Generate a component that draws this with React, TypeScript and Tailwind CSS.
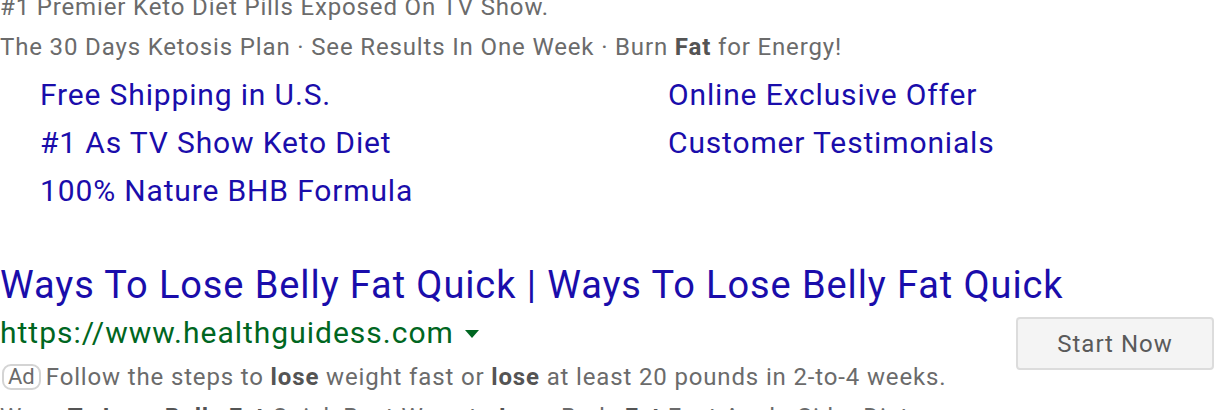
const sitelinks = [
  "Free Shipping in U.S.",
  "Online Exclusive Offer",
  "#1 As TV Show Keto Diet",
  "Customer Testimonials",
  "100% Nature BHB Formula",
];

const App = () => {
  return (
    <div className="w-[1216px] h-[410px] overflow-hidden bg-white font-['Roboto',sans-serif]">
      <div className="-mt-[13px] text-[24px] leading-[40px] tracking-[0.85px] text-[#6b6b6b] whitespace-nowrap">
        <div>#1 Premier Keto Diet Pills Exposed On TV Show.</div>
        <div>
          The 30 Days Ketosis Plan · See Results In One Week · Burn{" "}
          <b className="font-bold text-[#545454]">Fat</b> for Energy!
        </div>
      </div>

      <div className="mt-[4px] grid grid-cols-[628px_1fr] pl-[40px] text-[30px] leading-[48px] tracking-[0.85px] text-[#1a0dab]">
        {sitelinks.map((s) => (
          <a key={s} className="whitespace-nowrap">
            {s}
          </a>
        ))}
      </div>

      <h3 className="mt-[46px] text-[38px] leading-[48px] tracking-[0.9px] text-[#1a0dab] whitespace-nowrap">
        Ways To Lose Belly Fat Quick | Ways To Lose Belly Fat Quick
      </h3>

      <div className="mt-[3px] flex items-start justify-between">
        <div>
          <div className="flex items-center text-[30px] leading-[42px] tracking-[1px] text-[#006621]">
            <span>https://www.healthguidess.com</span>
            <svg width="14" height="8" viewBox="0 0 14 8" className="ml-[11px] mt-[2px]">
              <path d="M0 0h14L7 8z" fill="#006621" />
            </svg>
          </div>
          <div className="mt-[3px] flex items-center text-[24px] leading-[40px] tracking-[0.85px] text-[#6b6b6b] whitespace-nowrap">
            <span className="mr-[5px] ml-[2px] rounded-[9px] border-2 border-[#d4d4d4] px-[4px] text-[22px] leading-[22px] tracking-normal">
              Ad
            </span>
            <span>
              Follow the steps to <b className="text-[#545454]">lose</b> weight fast or{" "}
              <b className="text-[#545454]">lose</b> at least 20 pounds in 2-to-4 weeks.
            </span>
          </div>
          <div className="text-[24px] leading-[40px] tracking-[0.85px] text-[#6b6b6b] whitespace-nowrap">
            Ways <b className="text-[#545454]">To Lose Belly Fat</b> Quick Best Ways to{" "}
            <b className="text-[#545454]">Lose</b> Body <b className="text-[#545454]">Fat</b> Fast
            Apple Cider Diet
          </div>
        </div>
        <button className="mt-[5px] mr-[2px] h-[53px] w-[198px] rounded-[4px] border-2 border-[#dcdcdc] bg-[#f4f4f4] text-[24px] tracking-[1px] text-[#5a5a5a]">
          Start Now
        </button>
      </div>
    </div>
  );
};

export default App;
